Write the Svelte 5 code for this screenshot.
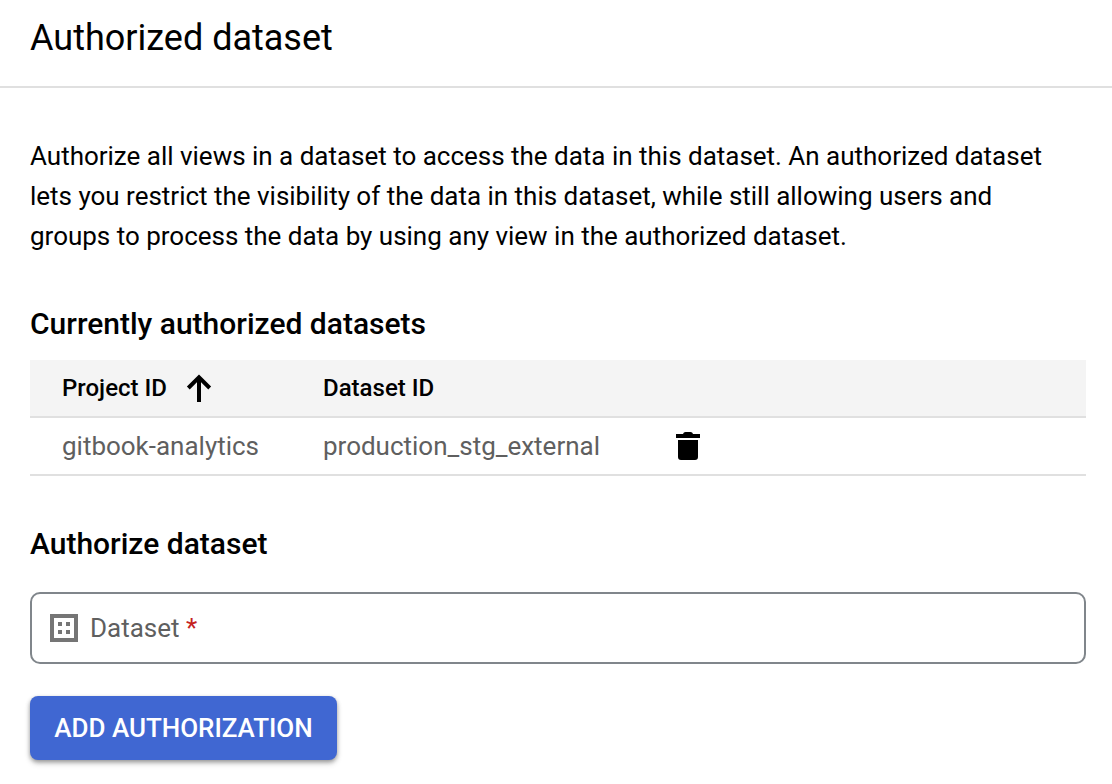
<script>
  const rows = [{ project: 'gitbook-analytics', dataset: 'production_stg_external' }];
</script>

<div class="panel">
  <header><h1>Authorized dataset</h1></header>
  <main>
    <p>Authorize all views in a dataset to access the data in this dataset. An authorized dataset<br />lets you restrict the visibility of the data in this dataset, while still allowing users and<br />groups to process the data by using any view in the authorized dataset.</p>
    <h2>Currently authorized datasets</h2>
    <div class="table">
      <div class="row head">
        <div class="project"><span>Project ID</span>
          <svg class="sort" width="26" height="28" viewBox="0 0 26 28"><path d="M13 28V4M2.3 14L13 3.3L23.7 14" fill="none" stroke="#000" stroke-width="4" /></svg>
        </div>
        <div><span>Dataset ID</span></div>
      </div>
      {#each rows as r}
        <div class="row body">
          <div class="project"><span>{r.project}</span></div>
          <div class="dataset"><span>{r.dataset}</span></div>
          <svg width="24" height="28" viewBox="0 0 24 28"><path d="M0 2H7Q7.5 0 9.5 0H14.5Q16.5 0 17 2H24V6H0ZM2 8H22V25Q22 28 19 28H5Q2 28 2 25Z" /></svg>
        </div>
      {/each}
    </div>
    <h2>Authorize dataset</h2>
    <div class="field">
      <svg width="28" height="28" viewBox="0 0 28 28"><path d="M2 2H26V26H2Z" fill="none" stroke="#757575" stroke-width="4" /><path d="M8 8h4v4h-4zM16 8h4v4h-4zM8 16h4v4h-4zM16 16h4v4h-4z" fill="#757575" /></svg>
      <span>Dataset <b>*</b></span>
    </div>
    <button>ADD AUTHORIZATION</button>
  </main>
</div>

<style>
  :global(body) { background: #fff; }
  .panel { width: 1112px; height: 784px; overflow: hidden; font-family: Roboto, sans-serif; color: #000; box-sizing: border-box; white-space: nowrap; }
  header { height: 88px; box-sizing: border-box; border-bottom: 2px solid #e0e0e0; padding: 14px 30px 0; }
  h1 { margin: 0; font-size: 36px; line-height: 48px; font-weight: 400; }
  main { padding: 48px 26px 0 30px; }
  p { margin: 0; font-size: 26px; line-height: 40px; letter-spacing: -0.011px; }
  h2 { margin: 48px 0 0; font-size: 30px; line-height: 40px; font-weight: 500; }
  .table { margin-top: 16px; }
  .row { display: flex; align-items: center; height: 58px; box-sizing: border-box; border-bottom: 2px solid #e0e0e0; padding-left: 32px; font-size: 26px; }
  .head { background: #f4f4f4; font-weight: 500; font-size: 24px; }
  .project { width: 261px; display: flex; align-items: center; gap: 19px; }
  .body { color: #5f5f5f; letter-spacing: -0.01px; }
  .dataset { width: 353px; }
  .field { height: 72px; margin-top: 28px; box-sizing: border-box; border: 2px solid #80868b; border-radius: 10px; padding-left: 18px; display: flex; align-items: center; gap: 12px; font-size: 26px; color: #5f5f5f; }
  b { color: #c5221f; font-weight: 400; }
  button { display: block; width: 307px; height: 64px; margin-top: 32px; padding: 0; border: 0; border-radius: 8px; background: #4067d2; color: #fff; font: 500 26px Roboto, sans-serif; letter-spacing: -0.02px; box-shadow: 0 2px 4px rgba(0,0,0,.35), 0 4px 6px rgba(0,0,0,.12); }
</style>
